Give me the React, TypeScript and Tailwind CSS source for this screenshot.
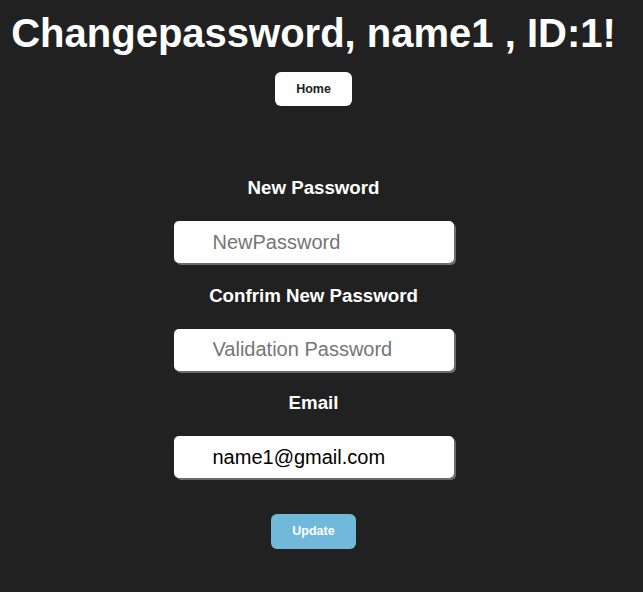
import React from "react";

const Field = ({ label, placeholder, value }: { label: string; placeholder: string; value?: string }) => (
  <div className="flex flex-col items-center">
    <label className="text-[18.7px] font-bold text-white leading-[22px]">{label}</label>
    <input
      className="mt-[22px] w-[280px] h-[42px] rounded-[5px] bg-white pl-[39px] text-[20px] text-black placeholder:text-[#757575] outline-none shadow-[2px_2px_0_#6b6b6b]"
      placeholder={placeholder}
      defaultValue={value}
    />
  </div>
);

const App = () => {
  return (
    <div className="min-h-[592px] w-full bg-[#212121] font-['Liberation_Sans',Arial,sans-serif]">
      <div className="w-[627px] flex flex-col items-center">
        <h1 className="mt-[10px] text-[40px] leading-[46px] font-bold text-white">Changepassword, name1 , ID:1!</h1>
        <button className="mt-[16px] w-[77px] h-[34px] rounded-[6px] bg-white text-[12.5px] font-bold text-[#212121]">
          Home
        </button>
        <div className="mt-[71px] flex flex-col items-center gap-[21.5px]">
          <Field label="New Password" placeholder="NewPassword" />
          <Field label="Confrim New Password" placeholder="Validation Password" />
          <Field label="Email" placeholder="Email" value="name1@gmail.com" />
        </div>
        <button className="mt-[36px] w-[85px] h-[35px] rounded-[6px] bg-[#70b9db] text-[12.5px] font-bold text-white">
          Update
        </button>
      </div>
    </div>
  );
};

export default App;
